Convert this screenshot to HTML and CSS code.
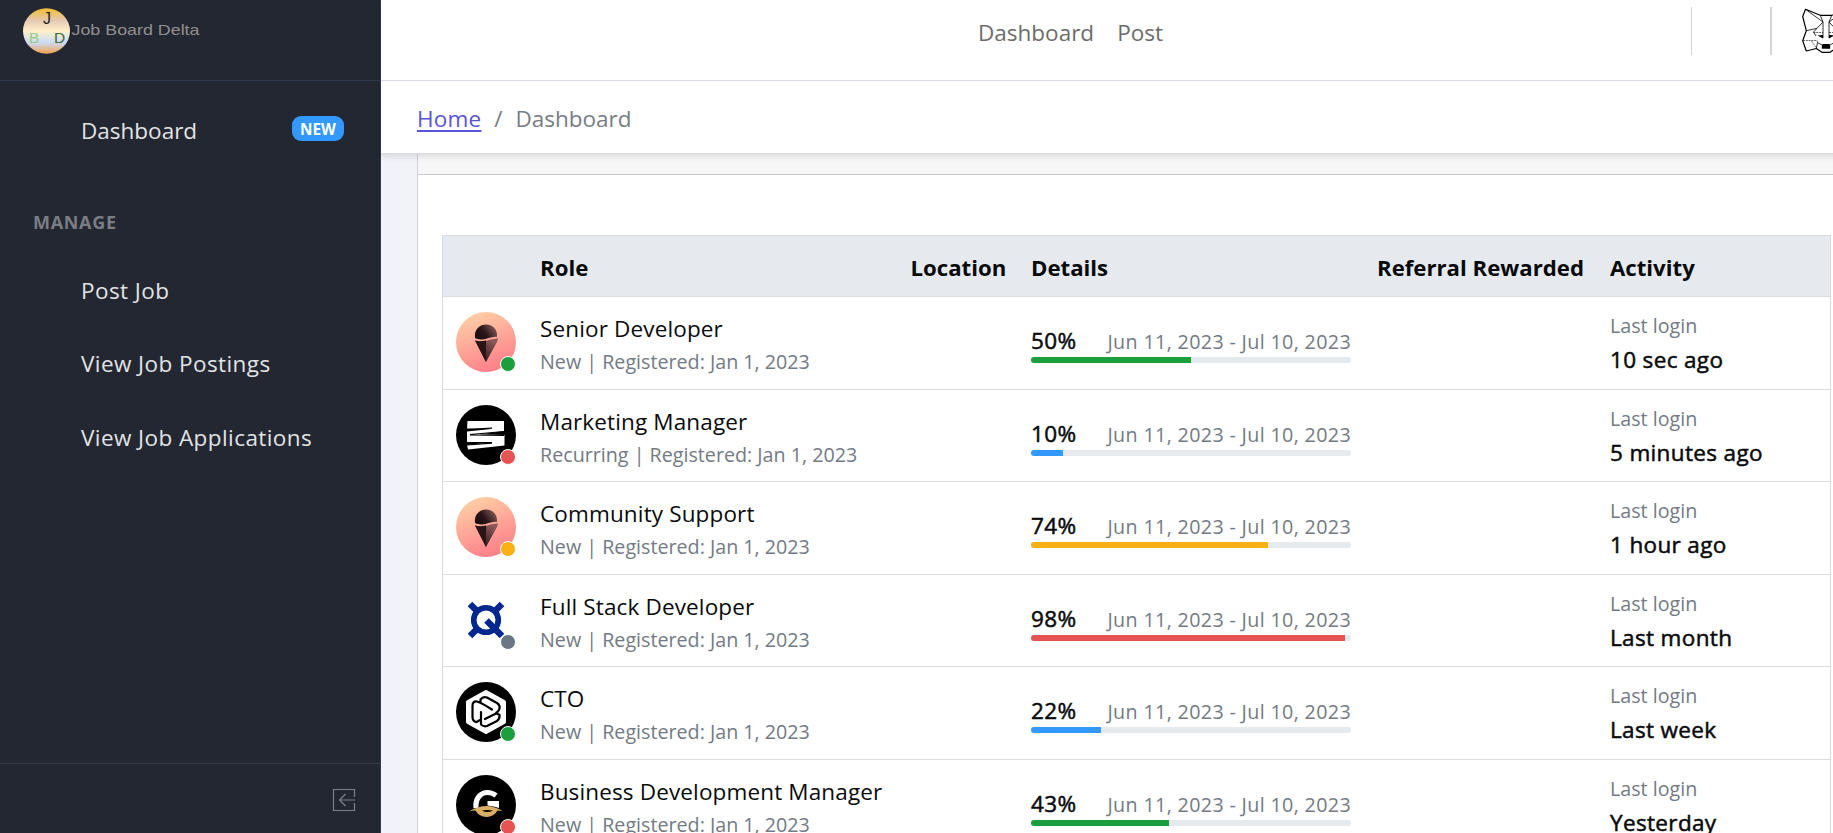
FILE: index.html
```html
<!DOCTYPE html>
<html lang="en">
<head>
<meta charset="utf-8">
<title>Job Board Delta</title>
<link rel="stylesheet" href="styles.css">
</head>
<body>
<svg width="0" height="0" class="defs">
  <defs>
    <linearGradient id="peach" x1=".3" y1="0" x2=".7" y2="1"><stop offset="0" stop-color="#ffd0a6"/><stop offset="1" stop-color="#ff7b88"/></linearGradient>
    <linearGradient id="scoop" x1="0" y1=".7" x2="1" y2=".2"><stop offset="0" stop-color="#1a0b10"/><stop offset=".4" stop-color="#2a1518"/><stop offset="1" stop-color="#8d5f5c"/></linearGradient>
    <linearGradient id="cone" x1="0" y1="1" x2=".5" y2="0"><stop offset="0" stop-color="#1c0c10"/><stop offset="1" stop-color="#8a5656"/></linearGradient>
    <linearGradient id="sky" x1="0" y1="0" x2="0" y2="1"><stop offset="0" stop-color="#f1bd2c"/><stop offset=".27" stop-color="#e5c9b4"/><stop offset=".5" stop-color="#fff0c9"/><stop offset=".75" stop-color="#cbdcf6"/><stop offset="1" stop-color="#f3a04c"/></linearGradient>
    <symbol id="icecream" viewBox="0 0 60 60">
      <circle cx="30" cy="30" r="30" fill="url(#peach)"/>
      <path d="M19 26C18 17 24 12.500 30 12.500S42 17 41 25C35 24 31 28 25 27.500Q21 27.300 19 26Z" fill="url(#scoop)"/>
      <path d="M19 28.500C27 31.500 32 27 42 26.500L41 30L30 50Z" fill="url(#cone)"/>
      <path d="M19 28.500Q24 30 30 28.500V50Z" fill="#2a1416"/>
    </symbol>
  </defs>
</svg>
<div class="app">
  <aside class="sidebar">
    <div class="brand">
      <svg width="180" height="48" viewBox="0 0 180 48">
        <ellipse cx="23.500" cy="24" rx="23.500" ry="22.800" fill="url(#sky)"/>
        <g class="brand-text">
          <text x="20" y="16.500" font-size="16" fill="#222">J</text>
          <text x="6" y="36" font-size="15.500" fill="#9bcb84">B</text>
          <text x="31" y="36" font-size="15.500" fill="#3f6b35">D</text>
          <text x="48.500" y="28" font-size="15" fill="#909090" textLength="128" lengthAdjust="spacingAndGlyphs">Job Board Delta</text>
        </g>
      </svg>
    </div>
    <nav class="menu">
      <a class="menu-item">Dashboard<span class="badge">NEW</span></a>
      <div class="menu-title">MANAGE</div>
      <a class="menu-item wide">Post Job</a>
      <a class="menu-item wide">View Job Postings</a>
      <a class="menu-item wide">View Job Applications</a>
    </nav>
    <div class="sidebar-foot">
      <svg width="24" height="24" viewBox="0 0 24 24" fill="none" stroke="#7b7f8a" stroke-width="1.200"><path d="M22.500 9V1.500H1.500V22.500H22.500V15M23 12H7.500M13.500 6L7.500 12L13.500 18"/></svg>
    </div>
  </aside>
  <div class="page">
    <header class="header">
      <div class="topbar">
        <nav class="topnav"><a>Dashboard</a><a>Post</a></nav>
        <span class="rule"></span>
        <span class="rule rule-wide"></span>
        <svg class="fox" width="48" height="46" viewBox="0 0 48 46" fill="none" stroke="#000" stroke-linejoin="round">
          <path stroke-width="1.200" d="M3.500 1.300L18.300 7.300H29.700L44.500 1.300L47.500 8.500L43.700 22.700L47.500 32.700L43.700 43L33.700 40.500L28 44.300H20L14.300 40.500L4.300 43L.7 32.700L4.300 22.700L.7 8.500Z"/>
          <path stroke-width=".8" d="M3.500 1.300L21 14L15 20.300L4.300 22.700M44.500 1.300L27 14L33 20.300L43.700 22.700M18.300 7.300L21 14V30M29.700 7.300L27 14V30M15 20.300L11.500 24L14 28M33 20.300L36.500 24L34 28M14.300 40.500L15.500 34.500L20 37M33.700 40.500L32.500 34.500L28 37"/>
          <path stroke-width=".6" stroke-dasharray="2 .8" d="M11.500 24.500H21M27 24.500H36.500M1 32.500H15L15.500 34.500M47 32.500H33L32.500 34.500M9.500 33L14.300 40M38.500 33L33.700 40"/>
          <path stroke="none" d="M20.500 36H27.500L28.200 38V40.800H19.800V38ZM15.500 27.500L21 27V30.500ZM32.500 27.500L27 27V30.500Z" fill="#000"/>
        </svg>
      </div>
      <div class="crumbs"><a class="home">Home</a><span class="slash">/</span><span>Dashboard</span></div>
    </header>
    <main class="content">
      <section class="card">
        <div class="card-head"></div>
        <div class="card-body">
          <div class="table">
            <div class="row head"><span></span><span>Role</span><span>Location</span><span>Details</span><span>Referral Rewarded</span><span>Activity</span></div>

            <div class="row">
              <div class="avatar"><svg width="60" height="60"><use href="#icecream"/></svg><i class="dot green"></i></div>
              <div class="role"><div>Senior Developer</div><small>New | Registered: Jan 1, 2023</small></div>
              <div></div>
              <div class="details"><div class="stat"><b>50%</b><small>Jun 11, 2023 - Jul 10, 2023</small></div><div class="bar"><div class="fill green" style="width:50%"></div></div></div>
              <div></div>
              <div class="activity"><small>Last login</small><b>10 sec ago</b></div>
            </div>

            <div class="row">
              <div class="avatar"><svg width="60" height="60" viewBox="0 0 60 60"><circle cx="30" cy="30" r="30"/><path fill="#fff" d="M11.500 16H48V26L23 29.500L48.500 30V40.500L12 44.500L11 40L35 37.500L11 37V26.500L35 24L11 23.500Z"/><path stroke="#000" stroke-width="1.200" d="M11 24.500L36 23.200M14 29.500L48 26.500M14 30L48 30.500M11 37.500H36M11 40L36 38.200"/></svg><i class="dot red"></i></div>
              <div class="role"><div>Marketing Manager</div><small>Recurring | Registered: Jan 1, 2023</small></div>
              <div></div>
              <div class="details"><div class="stat"><b>10%</b><small>Jun 11, 2023 - Jul 10, 2023</small></div><div class="bar"><div class="fill blue" style="width:10%"></div></div></div>
              <div></div>
              <div class="activity"><small>Last login</small><b>5 minutes ago</b></div>
            </div>

            <div class="row">
              <div class="avatar"><svg width="60" height="60"><use href="#icecream"/></svg><i class="dot yellow"></i></div>
              <div class="role"><div>Community Support</div><small>New | Registered: Jan 1, 2023</small></div>
              <div></div>
              <div class="details"><div class="stat"><b>74%</b><small>Jun 11, 2023 - Jul 10, 2023</small></div><div class="bar"><div class="fill yellow" style="width:74%"></div></div></div>
              <div></div>
              <div class="activity"><small>Last login</small><b>1 hour ago</b></div>
            </div>

            <div class="row">
              <div class="avatar"><svg width="60" height="60" viewBox="0 0 60 60" fill="none" stroke="#04268f"><circle cx="30" cy="30" r="12.300" stroke-width="5.600"/><path stroke-width="6.500" d="M14 14L21 21M46 14L39 21M14 46L21 39M30.500 30.500L46 46"/></svg><i class="dot gray"></i></div>
              <div class="role"><div>Full Stack Developer</div><small>New | Registered: Jan 1, 2023</small></div>
              <div></div>
              <div class="details"><div class="stat"><b>98%</b><small>Jun 11, 2023 - Jul 10, 2023</small></div><div class="bar"><div class="fill red" style="width:98%"></div></div></div>
              <div></div>
              <div class="activity"><small>Last login</small><b>Last month</b></div>
            </div>

            <div class="row">
              <div class="avatar"><svg width="60" height="60" viewBox="0 0 60 60"><circle cx="30" cy="30" r="30"/><path d="M30 10L48 20V40L30 50L12 40V20Z" fill="#fff" stroke="#fff" stroke-width="4" stroke-linejoin="round"/><path fill="none" stroke="#000" stroke-width="2.200" stroke-linecap="round" stroke-linejoin="round" d="M20 40Q16.500 39 16.500 35V24Q16.500 19 21 19.500Q24 20 36 27.500M24.500 20V17.500Q27 14 31 15.500L41 21Q45 24 43 28L40 31.500L29 37M40 31L43.500 33Q44 37 41 39L31 44Q28 45 25 42.500V30M20.500 40L25 37.500"/></svg><i class="dot green"></i></div>
              <div class="role"><div>CTO</div><small>New | Registered: Jan 1, 2023</small></div>
              <div></div>
              <div class="details"><div class="stat"><b>22%</b><small>Jun 11, 2023 - Jul 10, 2023</small></div><div class="bar"><div class="fill blue" style="width:22%"></div></div></div>
              <div></div>
              <div class="activity"><small>Last login</small><b>Last week</b></div>
            </div>

            <div class="row">
              <div class="avatar"><svg width="60" height="60" viewBox="0 0 60 60"><circle cx="30" cy="30" r="30"/><path fill="none" stroke="#fff" stroke-width="5.200" d="M20 33C19 23 25 17.500 31.500 17.500Q36 17.500 40 20.500"/><path fill="#fff" d="M31.500 26H43V33Q38 31 31.500 30.500Z"/><path fill="#d9ad62" d="M13 36.500Q22 31 30.500 31T47 36.500Q44 35.500 41.500 35.500Q38 42 30.500 42Q23 42 19.500 35.500Q16 35.500 13 36.500Z"/><path fill="#000" d="M26 35.500Q31 34.500 37 35.500Q31 38.500 26 35.500Z"/></svg><i class="dot red"></i></div>
              <div class="role"><div>Business Development Manager</div><small>New | Registered: Jan 1, 2023</small></div>
              <div></div>
              <div class="details"><div class="stat"><b>43%</b><small>Jun 11, 2023 - Jul 10, 2023</small></div><div class="bar"><div class="fill green" style="width:43%"></div></div></div>
              <div></div>
              <div class="activity"><small>Last login</small><b>Yesterday</b></div>
            </div>
          </div>
        </div>
      </section>
    </main>
  </div>
</div>
</body>
</html>
```
FILE: styles.css
```css
* { box-sizing: border-box; }
body { margin: 0; overflow: hidden; font: 22.5px/34px "Open Sans", "Noto Sans", sans-serif; color: #080a0c; background: #f2f3f8; }
.defs { position: absolute; }
.app { display: flex; height: 833px; overflow: hidden; }

.sidebar { width: 381px; flex: none; display: flex; flex-direction: column; background: #232731; border-right: 1px solid #303c54; color: #e2e3e5; }
.brand { height: 81px; padding: 7px 0 0 23px; border-bottom: 1px solid #303c4d; }
.brand svg { display: block; }
.brand-text { font-family: "Liberation Sans", Arial, sans-serif; }
.menu { flex: 1; padding-top: 13px; }
.menu-item { display: flex; align-items: center; justify-content: space-between; height: 73.5px; padding: 0 36px 0 81px; }
.wide { letter-spacing: .42px; }
.badge { width: 52px; height: 25px; margin-top: -4px; border-radius: 9px; background: #39f; color: #fff; font-size: 15.3px; font-weight: 700; line-height: 26px; text-align: center; }
.menu-title { height: 86.5px; padding: 37px 0 0 33px; color: #7b7d84; font-size: 18px; font-weight: 700; line-height: 34px; letter-spacing: .7px; }
.sidebar-foot { height: 70px; padding: 24px 0 0 332px; border-top: 1px solid #373c48; }
.sidebar-foot svg { display: block; }

.page { flex: none; width: 1480px; display: flex; flex-direction: column; }
.header { position: relative; background: #fff; border-bottom: 1px solid #d8dbe0; box-shadow: 0 3px 6px rgba(0, 0, 0, .1); }
.topbar { display: flex; height: 81px; padding: 7px 0 0 597px; border-bottom: 1px solid #d8dbe8; }
.topnav { display: flex; gap: 23px; width: 713px; padding-top: 9px; color: #6c6c6c; }
.rule { width: 1px; height: 48px; margin-right: 78px; background: #d4d4d6; }
.rule-wide { width: 2px; margin-right: 30px; }
.fox { margin-top: 1px; }
.crumbs { display: flex; height: 72px; padding: 21px 0 0 36px; color: #787c84; }
.home { letter-spacing: .2px; color: #5b54d6; text-decoration: underline; text-decoration-thickness: 2px; text-underline-offset: 3px; }
.slash { width: 34px; text-align: center; }

.content { flex: 1; padding-left: 36px; }
.card { border-left: 1px solid #d0d1d4; background: #fff; }
.card-head { height: 21px; background: #f7f7f7; border-bottom: 1px solid #c9cacc; }
.card-body { padding: 60px 0 0 24px; }

.table { width: 1389px; border: 1px solid #d8dbe0; border-bottom: 0; }
.row { display: grid; grid-template-columns: 97px 370.5px 120.500px 346px 233px 1fr; height: 92.5px; border-bottom: 1px solid #d8dde2; }
.head { height: 61px; padding-top: 3px; align-items: center; background: #e6e9ee; font-weight: 700; font-size: 22.2px; }
.avatar { position: relative; width: 60px; height: 60px; margin: 15px 0 0 13px; }
.avatar svg { display: block; }
.dot { position: absolute; right: 0; bottom: 0; width: 16px; height: 16px; border: 1px solid #fff; border-radius: 50%; }
.role { padding-top: 15px; white-space: nowrap; letter-spacing: .14px; }
small { display: block; font-size: 19.7px; line-height: 32px; letter-spacing: 0; color: #747a84; }
b { font-weight: 500; letter-spacing: .35px; -webkit-text-stroke: .5px #080a0c; }
.details { padding-top: 26px; }
.stat { display: flex; justify-content: space-between; align-items: baseline; width: 320px; height: 34px; padding-top: 1px; }
.stat small { letter-spacing: .35px; }
.bar { width: 320px; height: 6px; overflow: hidden; border-radius: 3px; background: #e6eaed; }
.fill { height: 6px; }
.activity { padding-top: 13px; }
.activity b { display: block; margin-top: 1px; }
.green { background: #1b9e3e; }
.red { background: #e55353; }
.blue { background: #39f; }
.yellow { background: #f9b115; }
.gray { background: #6b7785; }
```
